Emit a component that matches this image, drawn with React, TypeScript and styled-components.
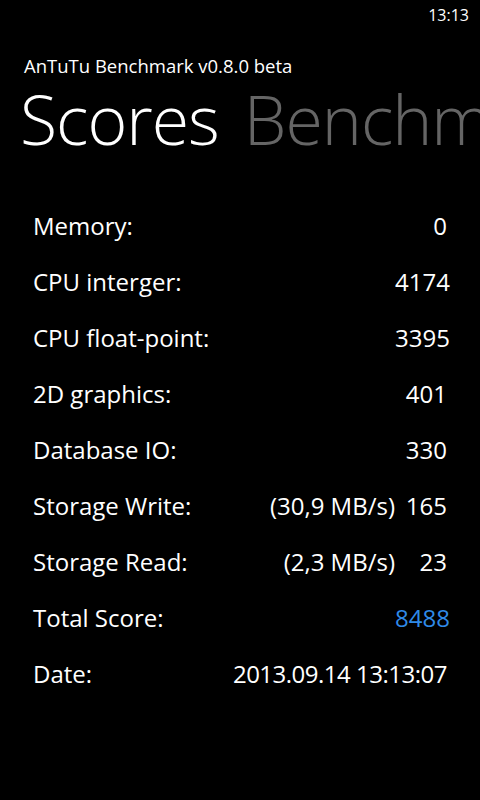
import styled, { createGlobalStyle } from 'styled-components';

const GlobalStyle = createGlobalStyle`
  html, body {
    margin: 0;
    padding: 0;
    background: #000;
  }
  body {
    font-family: 'Open Sans', 'Noto Sans', sans-serif;
    color: #fff;
  }
`;

interface ScoreRow {
  label: string;
  speed?: string;
  value: string;
  accent?: boolean;
}

const rows: ScoreRow[] = [
  { label: 'Memory:', value: '0' },
  { label: 'CPU interger:', value: '4174' },
  { label: 'CPU float-point:', value: '3395' },
  { label: '2D graphics:', value: '401' },
  { label: 'Database IO:', value: '330' },
  { label: 'Storage Write:', speed: '(30,9 MB/s)', value: '165' },
  { label: 'Storage Read:', speed: '(2,3 MB/s)', value: '23' },
  { label: 'Total Score:', value: '8488', accent: true },
];

const App = () => {
  return (
    <Page>
      <GlobalStyle />
      <StatusBar>
        <Clock>13:13</Clock>
      </StatusBar>

      <AppTitle>AnTuTu Benchmark v0.8.0 beta</AppTitle>

      <PivotHeaders>
        <PivotHeader active>Scores</PivotHeader>
        <PivotHeader>Benchmark</PivotHeader>
      </PivotHeaders>

      <List>
        {rows.map(row => (
          <Row key={row.label}>
            <Label>{row.label}</Label>
            {row.speed ? <Speed>{row.speed}</Speed> : <span />}
            <Value accent={row.accent}>{row.value}</Value>
          </Row>
        ))}
        <DateRow>
          <Label>Date:</Label>
          <DateValue>2013.09.14 13:13:07</DateValue>
        </DateRow>
      </List>
    </Page>
  );
};

const Page = styled.div`
  width: 480px;
  min-height: 800px;
  background: #000;
  overflow: hidden;
`;

const StatusBar = styled.div`
  display: flex;
  justify-content: flex-end;
  height: 32px;
  padding-right: 11px;
`;

const Clock = styled.span`
  font-size: 16px;
  line-height: 30px;
`;

const AppTitle = styled.div`
  padding-left: 24px;
  margin-top: 22px;
  font-size: 18.5px;
  line-height: 24px;
`;

const PivotHeaders = styled.div`
  display: flex;
  gap: 25px;
  padding-left: 20px;
  margin-top: 1px;
  white-space: nowrap;
`;

const PivotHeader = styled.div<{ active?: boolean }>`
  font-size: 68px;
  font-weight: 300;
  line-height: 80px;
  letter-spacing: -1px;
  color: ${p => (p.active ? '#ffffff' : '#656565')};
`;

const List = styled.div`
  display: flex;
  flex-direction: column;
  padding: 38px 33px 0 33px;
`;

const Row = styled.div`
  display: grid;
  grid-template-columns: 1fr auto 52px;
  align-items: center;
  height: 56px;
  font-size: 24px;
`;

const DateRow = styled.div`
  display: flex;
  justify-content: space-between;
  align-items: center;
  height: 56px;
  font-size: 24px;
`;

const Label = styled.span``;

const Speed = styled.span`
  text-align: right;
`;

const Value = styled.span<{ accent?: boolean }>`
  text-align: right;
  color: ${p => (p.accent ? '#2f8ae8' : '#ffffff')};
`;

const DateValue = styled.span`
  letter-spacing: -0.5px;
`;

export default App;
